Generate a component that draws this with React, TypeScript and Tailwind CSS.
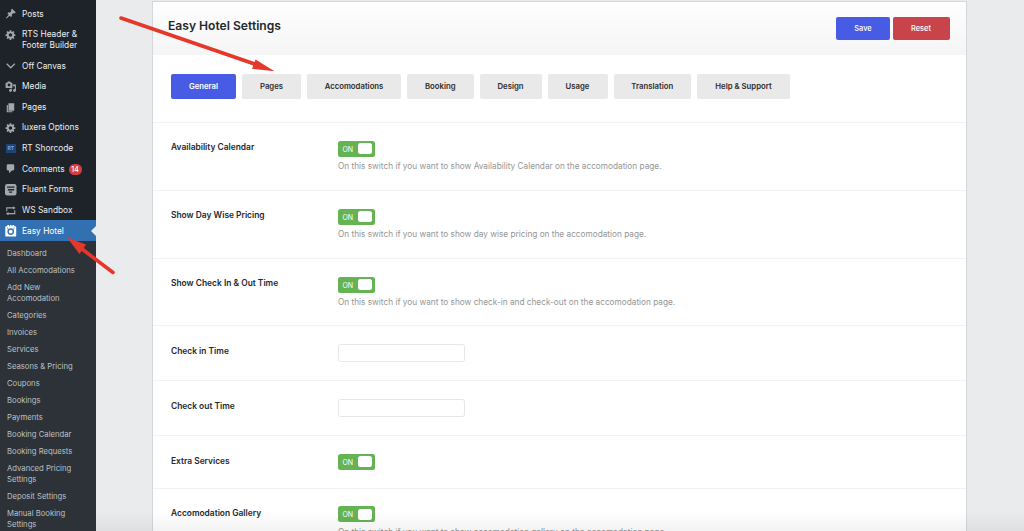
import clsx from 'clsx';
import type { ReactNode } from 'react';

interface iconProps {
  children: ReactNode;
  className?: string;
}

const Icon = ({ children, className }: iconProps) => (
  <svg
    viewBox="0 0 20 20"
    className={clsx('size-[11.5px] shrink-0 fill-current', className)}
  >
    {children}
  </svg>
);

const gear = (
  <Icon>
    <path d="M18 12h-2.18c-.17.7-.44 1.35-.81 1.93l1.54 1.54-2.1 2.1-1.54-1.54c-.58.36-1.23.63-1.91.79V19H8v-2.18c-.68-.16-1.33-.43-1.91-.79l-1.54 1.54-2.12-2.12 1.54-1.54c-.36-.58-.63-1.23-.79-1.91H1V9.03h2.17c.16-.7.44-1.35.8-1.94L2.43 5.55l2.1-2.1 1.54 1.54c.58-.37 1.24-.64 1.93-.81V2h3v2.18c.68.16 1.33.43 1.91.79l1.54-1.54 2.12 2.12-1.54 1.54c.36.59.64 1.24.8 1.94H18V12zm-8.5 1.5c1.66 0 3-1.34 3-3s-1.34-3-3-3-3 1.34-3 3 1.34 3 3 3z" />
  </Icon>
);

interface menuItem {
  label: string;
  icon: ReactNode;
  badge?: number;
  active?: boolean;
}

const menu: menuItem[] = [
  {
    label: 'Posts',
    icon: (
      <Icon>
        <path d="M10.44 3.02l1.82-1.82 6.36 6.35-1.83 1.82c-1.05-.68-2.48-.57-3.41.36l-.75.75c-.92.93-1.04 2.35-.35 3.41l-1.83 1.82-2.41-2.41-2.8 2.79c-.42.42-3.38 2.71-3.8 2.29s1.86-3.39 2.28-3.81l2.79-2.79L4.1 9.36l1.83-1.82c1.05.69 2.48.57 3.4-.36l.75-.75c.93-.92 1.05-2.35.36-3.41z" />
      </Icon>
    ),
  },
  { label: 'RTS Header & Footer Builder', icon: gear },
  {
    label: 'Off Canvas',
    icon: (
      <Icon>
        <path d="M3.8 5.5L10 11.6l6.2-6.1 1.6 1.7L10 15 2.2 7.2z" />
      </Icon>
    ),
  },
  {
    label: 'Media',
    icon: (
      <Icon>
        <path d="M13 11V4c0-.55-.45-1-1-1h-1.67L9 1H5L3.67 3H2c-.55 0-1 .45-1 1v7c0 .55.45 1 1 1h10c.55 0 1-.45 1-1zM7 4.5c1.38 0 2.5 1.12 2.5 2.5S8.38 9.5 7 9.5 4.5 8.38 4.5 7 5.62 4.5 7 4.5zM14 6h5v10.5c0 1.38-1.12 2.5-2.5 2.5S14 17.88 14 16.5s1.12-2.5 2.5-2.5c.17 0 .34.02.5.05V9h-3V6zm-4 8.05V13h2v3.5c0 1.38-1.12 2.5-2.5 2.5S7 17.88 7 16.5 8.12 14 9.5 14c.17 0 .34.02.5.05z" />
      </Icon>
    ),
  },
  {
    label: 'Pages',
    icon: (
      <Icon>
        <path d="M6 15V2h10v13H6zm-1 1h8v2H3V5h2v11z" />
      </Icon>
    ),
  },
  { label: 'luxera Options', icon: gear },
  {
    label: 'RT Shorcode',
    icon: (
      <span className="mx-[1px] size-[9.5px] shrink-0 bg-[#1d4377] text-center text-[5px] leading-[9.5px] font-bold text-[#7ba4d8]">
        RT
      </span>
    ),
  },
  {
    label: 'Comments',
    badge: 14,
    icon: (
      <Icon>
        <path d="M5 2h9c1.1 0 2 .9 2 2v7c0 1.1-.9 2-2 2h-2l-5 5v-5H5c-1.1 0-2-.9-2-2V4c0-1.1.9-2 2-2z" />
      </Icon>
    ),
  },
  {
    label: 'Fluent Forms',
    icon: (
      <Icon>
        <rect width="20" height="20" rx="4" />
        <path
          d="M3.5 5.5h13M5 10h11M7 14h5.5"
          className="fill-none stroke-[#1d2327] stroke-[2.2]"
        />
      </Icon>
    ),
  },
  {
    label: 'WS Sandbox',
    icon: (
      <Icon>
        <path
          d="M3 11V5h12M17 9v6H5"
          className="fill-none stroke-current stroke-[1.8]"
        />
        <path d="M14 2l4.5 3L14 8zM6 12l-4.5 3L6 18z" />
      </Icon>
    ),
  },
  {
    label: 'Easy Hotel',
    active: true,
    icon: (
      <Icon className="text-white">
        <path d="M2 2h2V0h3v2h1.5V0h3v2H13V0h3v2h2a1.5 1.5 0 0 1 1.5 1.5v15A1.5 1.5 0 0 1 18 20H2a1.5 1.5 0 0 1-1.5-1.5v-15A1.5 1.5 0 0 1 2 2z" />
        <circle
          cx="10"
          cy="11.5"
          r="4.6"
          className="fill-none stroke-[#3370b1] stroke-[2.4]"
        />
        <path
          d="M3.5 5.5h2M14.5 5.5h2"
          className="fill-none stroke-[#3370b1] stroke-[1.6]"
        />
      </Icon>
    ),
  },
];

const submenu = [
  'Dashboard',
  'All Accomodations',
  'Add New Accomodation',
  'Categories',
  'Invoices',
  'Services',
  'Seasons & Pricing',
  'Coupons',
  'Bookings',
  'Payments',
  'Booking Calendar',
  'Booking Requests',
  'Advanced Pricing Settings',
  'Deposit Settings',
  'Manual Booking Settings',
];

const tabs = [
  { label: 'General', width: 'w-[65px]', active: true },
  { label: 'Pages', width: 'w-[59px]' },
  { label: 'Accomodations', width: 'w-[94px]' },
  { label: 'Booking', width: 'w-[66.5px]' },
  { label: 'Design', width: 'w-[62px]' },
  { label: 'Usage', width: 'w-[60px]' },
  { label: 'Translation', width: 'w-[77.5px]' },
  { label: 'Help & Support', width: 'w-[93px]' },
];

interface fieldProps {
  label: string;
  type: 'switch' | 'text';
  des?: string;
  height: string;
}

const fields: fieldProps[] = [
  {
    label: 'Availability Calendar',
    type: 'switch',
    des: 'On this switch if you want to show Availability Calendar on the accomodation page.',
    height: 'h-[68px]',
  },
  {
    label: 'Show Day Wise Pricing',
    type: 'switch',
    des: 'On this switch if you want to show day wise pricing on the accomodation page.',
    height: 'h-[68px]',
  },
  {
    label: 'Show Check In & Out Time',
    type: 'switch',
    des: 'On this switch if you want to show check-in and check-out on the accomodation page.',
    height: 'h-[67.4px]',
  },
  { label: 'Check in Time', type: 'text', height: 'h-[55px]' },
  { label: 'Check out Time', type: 'text', height: 'h-[55px]' },
  { label: 'Extra Services', type: 'switch', height: 'h-[52.4px]' },
  {
    label: 'Accomodation Gallery',
    type: 'switch',
    des: 'On this switch if you want to show accomodation gallery on the accomodation page.',
    height: 'h-[68px]',
  },
];

const Sidebar = () => (
  <aside className="flex w-24 shrink-0 flex-col bg-[#1d2329] pt-[3.5px]">
    <nav>
      {menu.map(({ label, icon, badge, active }) => (
        <a
          key={label}
          className={clsx(
            'relative flex items-start gap-[5.5px] pt-[5.1px] pb-[4.6px] pl-[5px] text-[8.35px] leading-[10.9px]',
            active ? 'bg-[#3370b1] text-white' : 'text-[#eceded]',
          )}
        >
          <span
            className={clsx(
              'flex h-[10.9px] items-center',
              !active && 'text-[#a3a8ac]',
            )}
          >
            {icon}
          </span>
          <span className="max-w-[62px]">{label}</span>
          {badge && (
            <span className="-ml-[1.5px] flex h-[11px] w-[13px] items-center justify-center rounded-full bg-[#d0413f] pt-[1px] text-[7px] leading-none font-medium text-white">
              {badge}
            </span>
          )}
          {active && (
            <span className="absolute top-[5.3px] right-0 border-y-5 border-r-5 border-y-transparent border-r-[#e9ebed]" />
          )}
        </a>
      ))}
    </nav>
    <ul className="flex-1 bg-[#2c3238] pt-[4px] text-[7.7px] leading-[11px] text-[#bec1c4]">
      {submenu.map((label) => (
        <li key={label} className="py-[3.02px] pr-4 pl-[7px]">
          {label}
        </li>
      ))}
    </ul>
  </aside>
);

const Switch = () => (
  <button className="flex h-[16px] w-[36.5px] items-center justify-between rounded-[2.5px] bg-[#66b354] pr-[2.5px] pl-[4.5px] text-[7px] leading-none text-white">
    <span className="pt-[1px]">ON</span>
    <span className="h-[11px] w-[14.5px] rounded-[2.5px] bg-white" />
  </button>
);

const Field = ({ label, type, des, height }: fieldProps) => (
  <div
    className={clsx(
      'flex shrink-0 border-t border-[#f2f2f2] pl-[18px]',
      height,
    )}
  >
    <h4 className="w-[167px] pt-[19.3px] text-[8.42px] leading-[11px] font-semibold text-[#23282d]">
      {label}
    </h4>
    <div className="pt-[17.6px]">
      {type === 'switch' ? (
        <Switch />
      ) : (
        <input
          type="text"
          className="block h-[18.5px] w-[126.5px] rounded-[2.5px] border border-[#e6e6e6] bg-white"
        />
      )}
      {des && (
        <p className="mt-[4.2px] text-[8.25px] leading-[11px] whitespace-nowrap text-[#959595]">
          {des}
        </p>
      )}
    </div>
  </div>
);

const Arrows = () => (
  <svg
    viewBox="0 0 1024 531"
    className="pointer-events-none absolute inset-0 h-full w-full fill-[#e5372a] stroke-[#e5372a]"
  >
    <path d="M121 18L256 64.5" strokeWidth="3.6" strokeLinecap="round" />
    <path d="M255.5 59.5L274.5 71.3L252 68.8z" stroke="none" />
    <path d="M113 272.5L80 247.5" strokeWidth="3.6" strokeLinecap="round" />
    <path d="M67 237.5L86 244.5L79.5 254z" stroke="none" />
  </svg>
);

const App = () => {
  return (
    <div className="relative flex h-[531px] w-[1024px] overflow-hidden bg-[#e9ebed] font-['Inter',sans-serif]">
      <Sidebar />
      <main className="mt-[1px] ml-14 flex w-[814.5px] shrink-0 flex-col border border-b-0 border-[#d5d7d9] bg-white">
        <header className="flex h-[53px] shrink-0 items-start justify-between bg-linear-to-b from-[#fefefe] to-[#f5f5f5] pt-[15px] pr-[16px] pl-[15px]">
          <h1 className="text-[12.1px] leading-[17.5px] font-semibold text-[#23282d]">
            Easy Hotel Settings
          </h1>
          <div className="flex gap-[2.5px] text-[7.5px] font-medium text-white">
            <button className="h-[23px] w-[54px] rounded-[2px] bg-[#485be5] pt-[1px]">
              Save
            </button>
            <button className="h-[23px] w-[57px] rounded-[2px] bg-[#c9434a] pt-[1px]">
              Reset
            </button>
          </div>
        </header>
        <div className="flex h-[67px] shrink-0 gap-[6px] pt-[18.5px] pl-[18px]">
          {tabs.map(({ label, width, active }) => (
            <button
              key={label}
              className={clsx(
                'h-[25.5px] shrink-0 rounded-[2px] pt-[1px] text-[7.75px] font-semibold',
                width,
                active
                  ? 'bg-[#485be5] text-white'
                  : 'bg-[#e9e9e9] text-[#2c2c2c]',
              )}
            >
              {label}
            </button>
          ))}
        </div>
        {fields.map((field) => (
          <Field key={field.label} {...field} />
        ))}
      </main>
      <div className="pointer-events-none absolute right-0 bottom-0 left-24 h-5 bg-linear-to-b from-transparent to-black/5" />
      <Arrows />
    </div>
  );
};

export default App;
